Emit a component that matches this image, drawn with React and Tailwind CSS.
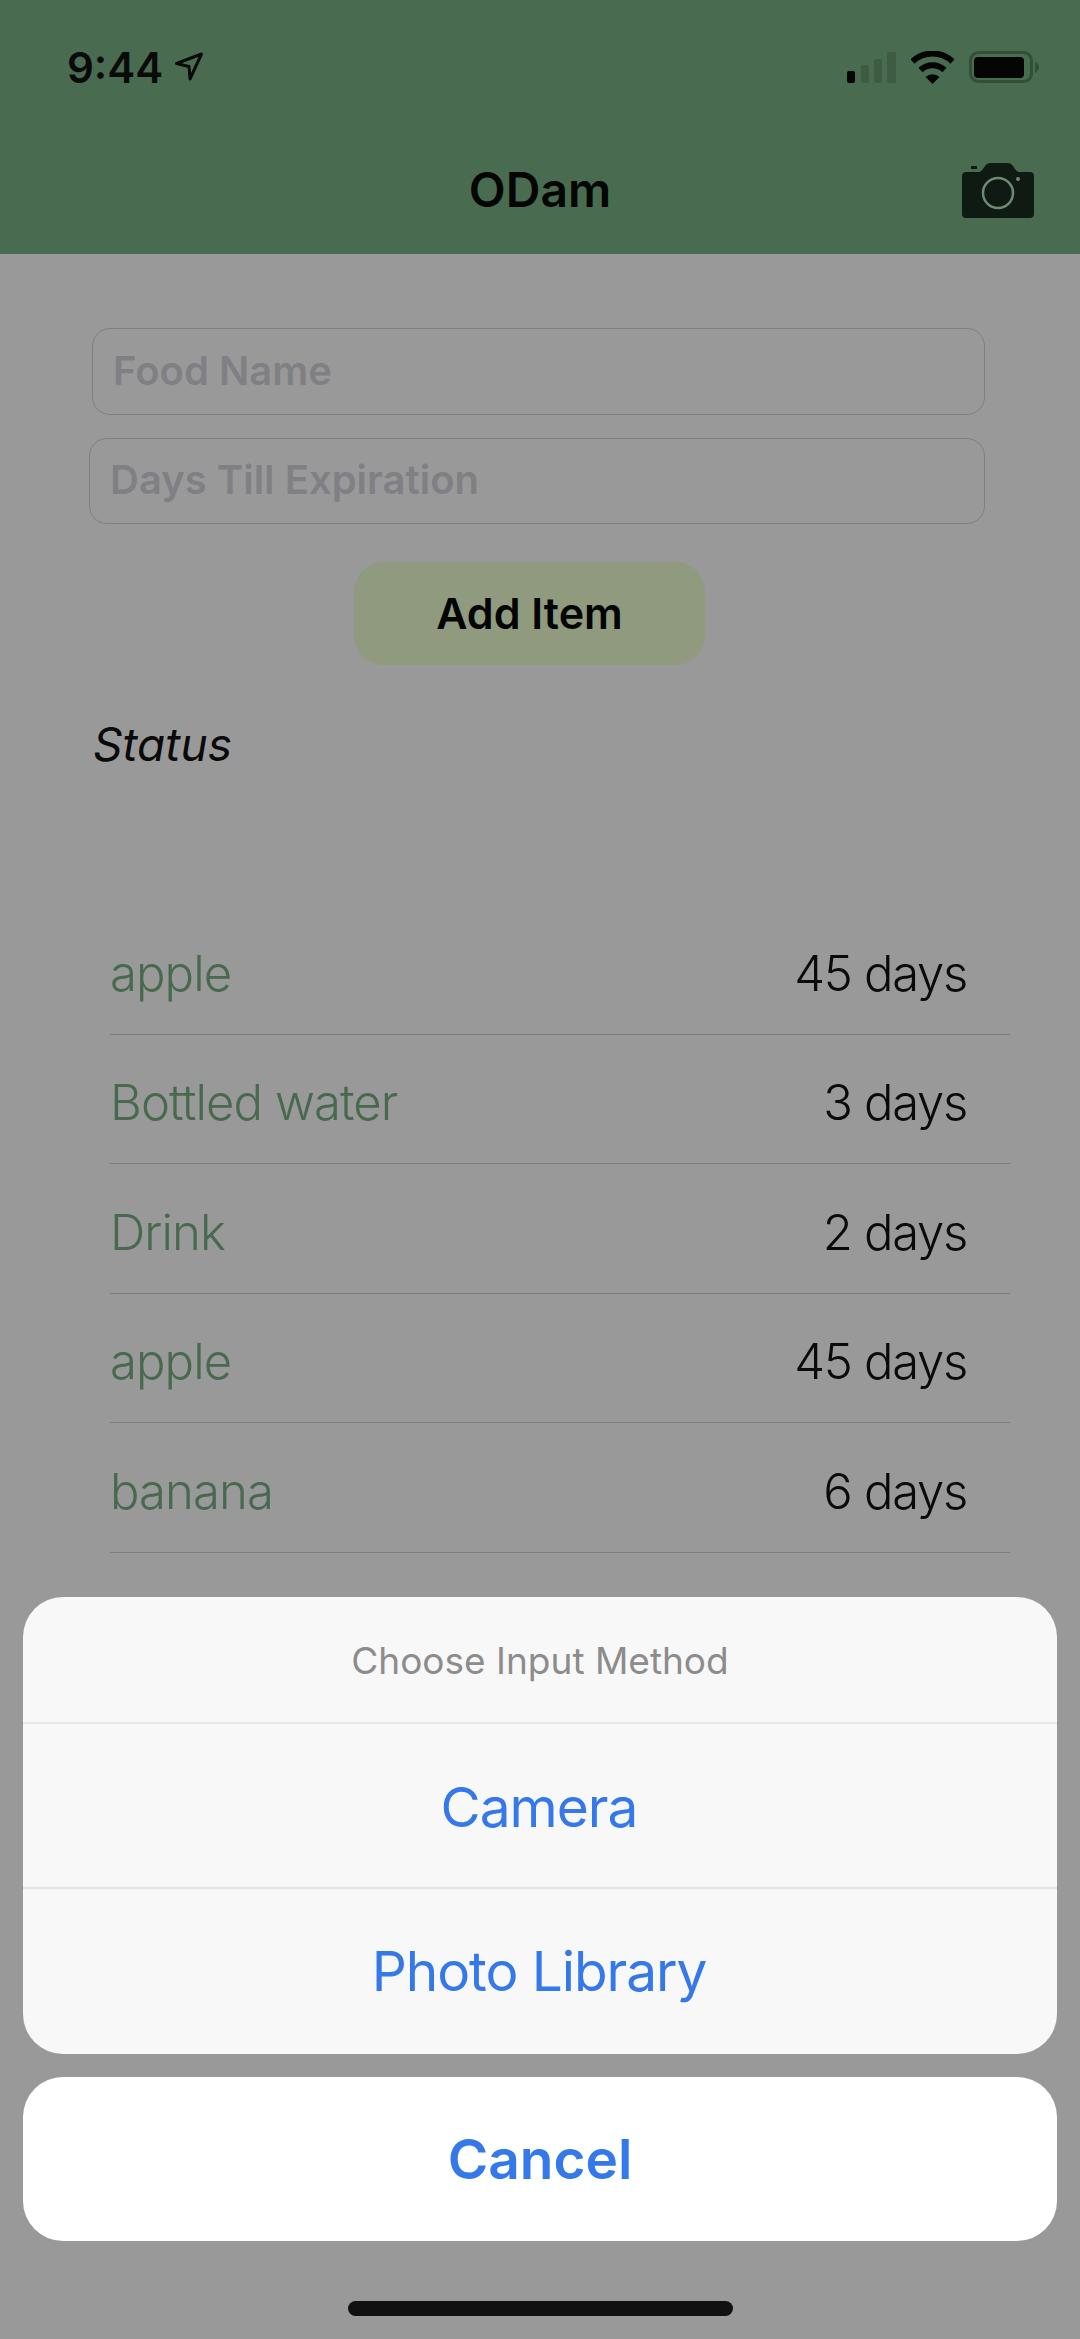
const foods = [
  { name: "apple", days: "45 days" },
  { name: "Bottled water", days: "3 days" },
  { name: "Drink", days: "2 days" },
  { name: "apple", days: "45 days" },
  { name: "banana", days: "6 days" },
  { name: "", days: "" },
  { name: "", days: "" },
  { name: "", days: "" },
];

function LocationArrow() {
  return (
    <svg width="30" height="30" viewBox="0 0 30 30" fill="none" stroke="#0a0a0a" strokeWidth="3" strokeLinejoin="round">
      <path d="M27.5 2 L2.5 11.5 L15 14.5 L16 27 Z" />
    </svg>
  );
}

function SignalBars() {
  return (
    <svg width="49" height="31" viewBox="0 0 49 31">
      <rect x="0" y="19" width="8" height="12" rx="2" fill="#050505" />
      <rect x="14" y="13" width="8" height="18" rx="2" fill="#3d5c43" />
      <rect x="27" y="7" width="8" height="24" rx="2" fill="#3d5c43" />
      <rect x="40" y="0" width="9" height="31" rx="2" fill="#3d5c43" />
    </svg>
  );
}

function Wifi() {
  return (
    <svg width="43" height="33" viewBox="0 0 43 33" fill="none" stroke="#050505" strokeWidth="6">
      <path d="M1.5 10.5 A 29 29 0 0 1 41.5 10.5" />
      <path d="M9.5 19 A 17.5 17.5 0 0 1 33.5 19" />
      <path d="M21.5 33 L14.5 26 A 10 10 0 0 1 28.5 26 Z" fill="#050505" stroke="none" />
    </svg>
  );
}

function Battery() {
  return (
    <svg width="70" height="32" viewBox="0 0 70 32">
      <rect x="1.5" y="1.5" width="61" height="29" rx="8" fill="none" stroke="#334f39" strokeWidth="3" />
      <rect x="5" y="6" width="50" height="21" rx="4" fill="#050505" />
      <path d="M66 11 Q70 12 70 16 Q70 20 66 22 Z" fill="#334f39" />
    </svg>
  );
}

function CameraIcon() {
  return (
    <svg width="72" height="55" viewBox="0 0 72 55">
      <path
        d="M4 9 H17 Q19 9 21 6 L23 3 Q25 0 28 0 H46 Q49 0 51 3 L53 6 Q55 9 57 9 H68 Q72 9 72 13 V51 Q72 55 68 55 H4 Q0 55 0 51 V13 Q0 9 4 9 Z"
        fill="#0f1a13"
      />
      <rect x="9" y="3" width="6" height="3" fill="#0f1a13" />
      <circle cx="36" cy="30" r="15" fill="none" stroke="#6f8a74" strokeWidth="2.5" />
      <circle cx="56" cy="16" r="2" fill="#6f8a74" />
    </svg>
  );
}

function FoodRow({ name, days }) {
  return (
    <div className="h-[129.6px] border-b border-[#7d7d7d] flex items-center justify-between pr-[43px] pt-[8px] text-[49px] font-light">
      <span className="tracking-[-0.9px] text-[#47694d]">{name}</span>
      <span className="tracking-[-1.3px] text-[#0a0a0a]">{days}</span>
    </div>
  );
}

export default function App() {
  return (
    <div className="relative h-[2339px] w-[1080px] overflow-hidden bg-[#999999] font-['Inter',sans-serif]">
      {/* Green header with status bar */}
      <header className="h-[254px] bg-[#496c50]">
        <div className="h-[134px] flex items-center justify-between pl-[67px] pr-[41px]">
          <div className="flex items-center gap-[11px]">
            <span className="text-[42px] font-semibold text-[#0a0a0a]">9:44</span>
            <LocationArrow />
          </div>
          <div className="flex items-center gap-[15px]">
            <SignalBars />
            <Wifi />
            <Battery />
          </div>
        </div>
        <div className="h-[112px] grid grid-cols-[1fr_auto_1fr] items-center px-[46px]">
          <div />
          <h1 className="text-[48px] font-semibold text-[#050505]">ODam</h1>
          <div className="justify-self-end">
            <CameraIcon />
          </div>
        </div>
      </header>

      {/* Form */}
      <div className="pt-[74px] flex flex-col">
        <input
          placeholder="Food Name"
          className="ml-[92px] w-[893px] h-[87px] pl-[20px] pr-[21px] pb-[3px] rounded-[18px] border border-[#808080] text-[40px] font-semibold placeholder:text-[#808084] outline-none"
        />
        <input
          placeholder="Days Till Expiration"
          className="ml-[89px] mt-[23px] w-[896px] h-[86px] pl-[20px] pr-[21px] pb-[3px] rounded-[18px] border border-[#808080] text-[40px] font-semibold placeholder:text-[#808084] outline-none"
        />
        <button className="ml-[354px] mt-[38px] w-[351px] h-[103px] rounded-[30px] bg-[#8f9a7e] text-[43px] font-semibold text-[#050505]">
          Add Item
        </button>
        <p className="ml-[93px] mt-[50px] h-[58px] text-[46px] leading-[58px] italic text-[#0a0a0a]">Status</p>
      </div>

      {/* Food list */}
      <div className="mt-[132px] ml-[110px] w-[900px]">
        {foods.map((food, i) => (
          <FoodRow key={i} name={food.name} days={food.days} />
        ))}
      </div>

      {/* Action sheet */}
      <div className="absolute left-[23px] right-[23px] top-[1597px] flex flex-col gap-[23px]">
        <div className="h-[457px] rounded-[40px] bg-[#f8f8f8] flex flex-col">
          <div className="h-[127px] pt-[2px] flex items-center justify-center border-b-2 border-[#e9e9e9] text-[37px] text-[#8c8c8c]">
            Choose Input Method
          </div>
          <button className="h-[165px] pt-[3px] pr-[2px] border-b-2 border-[#e2e2e2] text-[55px] tracking-[-1px] text-[#3478ea]">Camera</button>
          <button className="flex-1 pr-[2px] text-[55px] tracking-[-1.1px] text-[#3478ea]">Photo Library</button>
        </div>
        <button className="h-[164px] rounded-[40px] bg-white text-[55px] font-semibold text-[#3478ea]">Cancel</button>
      </div>

      {/* Home indicator */}
      <div className="absolute left-[348px] top-[2301px] w-[385px] h-[15px] rounded-full bg-[#111111]" />
    </div>
  );
}
